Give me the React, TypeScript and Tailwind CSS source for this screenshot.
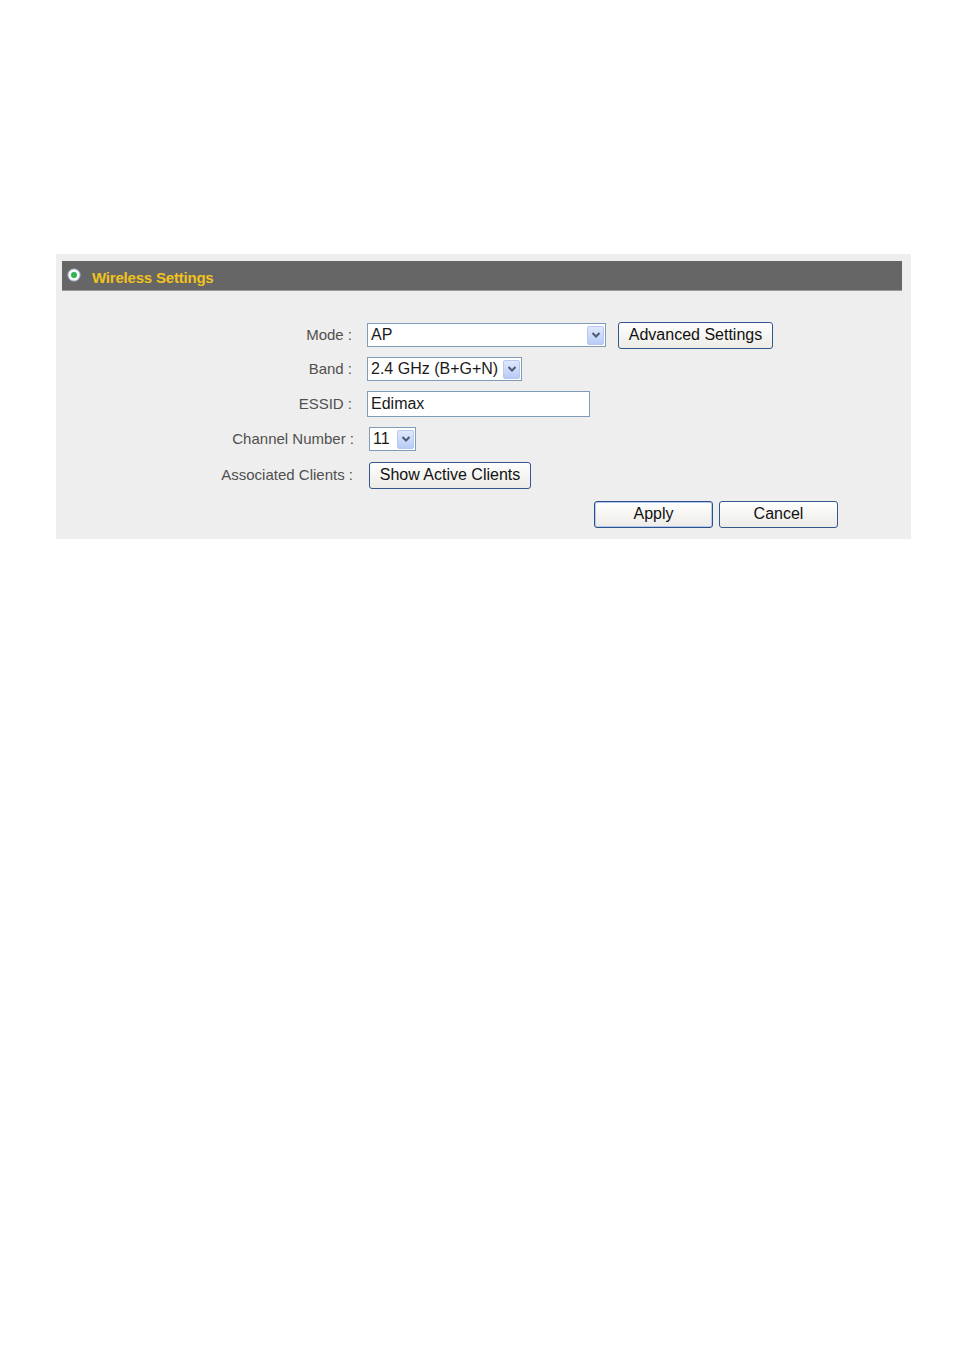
import React from "react";

function Arrow() {
  return (
    <svg width="10" height="8" viewBox="0 0 10 8">
      <path d="M1.5 2 L5 5.5 L8.5 2" fill="none" stroke="#4d5a73" strokeWidth="2" />
    </svg>
  );
}

function Select({ value, width }: { value: string; width: number }) {
  return (
    <div
      className="flex h-[24px] items-center border border-[#7f9db9] bg-white pl-[3px] pr-[1px]"
      style={{ width }}
    >
      <span className="flex-1 text-[16px] leading-none text-[#1a1a1a]">{value}</span>
      <div className="flex h-[19px] w-[17px] items-center justify-center rounded-[2px] border border-[#b8c8ef] bg-gradient-to-b from-[#dfe8fd] to-[#b8cbf6]">
        <Arrow />
      </div>
    </div>
  );
}

function Btn({ children, w, focused }: { children: React.ReactNode; w: number; focused?: boolean }) {
  return (
    <div
      className={
        "flex h-[27px] items-center justify-center rounded-[3px] border bg-gradient-to-b from-[#ffffff] to-[#ecebe6] text-[16px] leading-none text-[#111] " +
        (focused ? "border-[#2b4f8a] shadow-[inset_0_0_0_1px_#b3c9ef]" : "border-[#33568c]")
      }
      style={{ width: w }}
    >
      {children}
    </div>
  );
}

function Label({ children, w }: { children: React.ReactNode; w: number }) {
  return (
    <div className="text-right text-[15px] text-[#505050]" style={{ width: w }}>
      {children}
    </div>
  );
}

export default function App() {
  return (
    <div className="min-h-[1350px] w-[954px] bg-white pt-[254px] pl-[56px]" style={{ fontFamily: "'Liberation Sans', Arial, sans-serif" }}>
      <div className="h-[285px] w-[855px] bg-[#eeeeee] px-[6px] pt-[7px]">
        <div className="flex h-[30px] w-[840px] items-center border-b border-[#9a9a9a] bg-[#666666] pl-[5px]">
          <svg width="14" height="14" viewBox="0 0 14 14" className="-mt-[2px]">
            <circle cx="7" cy="7" r="6.3" fill="#f4f6fa" stroke="#7d8ca8" strokeWidth="1" />
            <circle cx="7" cy="7" r="3" fill="#2fb34a" />
          </svg>
          <span className="ml-[11px] mt-[5px] text-[15px] font-bold text-[#f2c21d]" style={{ letterSpacing: "-0.2px" }}>
            Wireless Settings
          </span>
        </div>

        <div className="-ml-[6px] mt-[30px] flex flex-col">
          <div className="flex h-[28px] items-center">
            <Label w={296}>Mode :</Label>
            <div className="ml-[15px]"><Select value="AP" width={239} /></div>
            <div className="ml-[12px]"><Btn w={155}>Advanced Settings</Btn></div>
          </div>
          <div className="mt-[6px] flex h-[28px] items-center">
            <Label w={296}>Band :</Label>
            <div className="ml-[15px]"><Select value="2.4 GHz (B+G+N)" width={155} /></div>
          </div>
          <div className="mt-[7px] flex h-[28px] items-center">
            <Label w={296}>ESSID :</Label>
            <div className="ml-[15px] flex h-[26px] w-[223px] items-center border border-[#7f9db9] bg-white pl-[3px] text-[16px] text-[#1a1a1a]">Edimax</div>
          </div>
          <div className="mt-[7px] flex h-[28px] items-center">
            <Label w={298}>Channel Number :</Label>
            <div className="ml-[15px]"><Select value="11" width={47} /></div>
          </div>
          <div className="mt-[8px] flex h-[28px] items-center">
            <Label w={297}>Associated Clients :</Label>
            <div className="ml-[16px]"><Btn w={162}>Show Active Clients</Btn></div>
          </div>
          <div className="mt-[11px] flex h-[28px] items-center pl-[538px]">
            <Btn w={119} focused>Apply</Btn>
            <div className="ml-[6px]"><Btn w={119}>Cancel</Btn></div>
          </div>
        </div>
      </div>
    </div>
  );
}
